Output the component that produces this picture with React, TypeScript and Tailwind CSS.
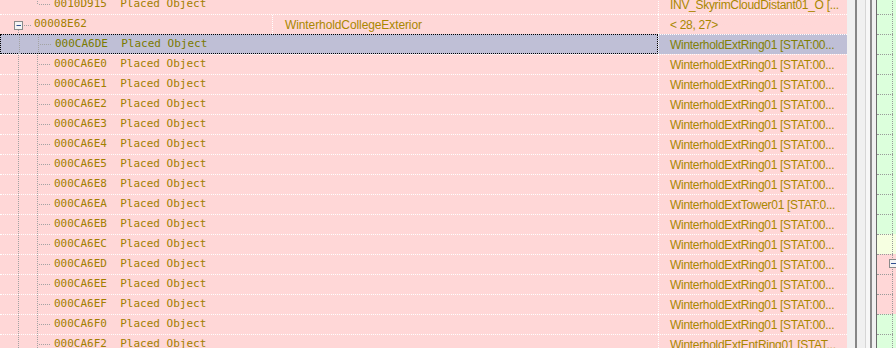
import React from 'react';

type Row = {
  id: string;
  kind: 'lastChild' | 'parent' | 'child';
  label?: string;
  name?: string;
  info: string;
  selected?: boolean;
};

const ring = 'WinterholdExtRing01 [STAT:00...';

const rows: Row[] = [
  { id: '0010D915', kind: 'lastChild', label: 'Placed Object', info: 'INV_SkyrimCloudDistant01_O [...' },
  { id: '00008E62', kind: 'parent', name: 'WinterholdCollegeExterior', info: '< 28,  27>' },
  { id: '000CA6DE', kind: 'child', label: 'Placed Object', info: ring, selected: true },
  { id: '000CA6E0', kind: 'child', label: 'Placed Object', info: ring },
  { id: '000CA6E1', kind: 'child', label: 'Placed Object', info: ring },
  { id: '000CA6E2', kind: 'child', label: 'Placed Object', info: ring },
  { id: '000CA6E3', kind: 'child', label: 'Placed Object', info: ring },
  { id: '000CA6E4', kind: 'child', label: 'Placed Object', info: ring },
  { id: '000CA6E5', kind: 'child', label: 'Placed Object', info: ring },
  { id: '000CA6E8', kind: 'child', label: 'Placed Object', info: ring },
  { id: '000CA6EA', kind: 'child', label: 'Placed Object', info: 'WinterholdExtTower01 [STAT:0...' },
  { id: '000CA6EB', kind: 'child', label: 'Placed Object', info: ring },
  { id: '000CA6EC', kind: 'child', label: 'Placed Object', info: ring },
  { id: '000CA6ED', kind: 'child', label: 'Placed Object', info: ring },
  { id: '000CA6EE', kind: 'child', label: 'Placed Object', info: ring },
  { id: '000CA6EF', kind: 'child', label: 'Placed Object', info: ring },
  { id: '000CA6F0', kind: 'child', label: 'Placed Object', info: ring },
  { id: '000CA6F2', kind: 'child', label: 'Placed Object', info: 'WinterholdExtEntRing01 [STAT...' },
];

// right pane row colours, same 20px grid as the list
const sideRows = [
  'g', 'g', 'g', 'g', 'g', 'g', 'g', 'g', 'g', 'g', 'g', 'g', 'y', 'p', 'p', 'p', 'g', 'g',
];

const mono = { fontFamily: '"DejaVu Sans Mono", monospace' };
const sans = { fontFamily: '"Liberation Sans", Arial, sans-serif' };

const MinusBox = () => (
  <>
    <rect x="14.5" y="6.5" width="8" height="8" fill="#f4f4f4" stroke="#8a8a8a" />
    <line x1="16.5" y1="10.5" x2="21" y2="10.5" stroke="#2f4f8f" />
  </>
);

const TreeLines: React.FC<{ kind: Row['kind'] }> = ({ kind }) => (
  <svg width="54" height="19" className="shrink-0" stroke="#a3a3a3" strokeDasharray="1 1">
    {kind === 'lastChild' && (
      <>
        <line x1="37.5" y1="0" x2="37.5" y2="10" />
        <line x1="39" y1="9.5" x2="51" y2="9.5" />
      </>
    )}
    {kind === 'parent' && (
      <>
        <line x1="18.5" y1="15" x2="18.5" y2="19" />
        <line x1="24" y1="10.5" x2="32" y2="10.5" />
        <g strokeDasharray="none">
          <MinusBox />
        </g>
      </>
    )}
    {kind === 'child' && (
      <>
        <line x1="18.5" y1="0" x2="18.5" y2="19" />
        <line x1="37.5" y1="0" x2="37.5" y2="19" />
        <line x1="39" y1="9.5" x2="51" y2="9.5" />
      </>
    )}
  </svg>
);

const ListRow: React.FC<{ row: Row }> = ({ row }) => {
  const bg = row.selected ? 'bg-[#bfbfd6]' : 'bg-[#ffd7d7]';
  const textColor = row.selected ? 'text-[#7a7a00]' : 'text-[#a27f00]';
  const sideColor = row.selected ? 'text-[#7f7f06]' : 'text-[#a98700]';
  return (
    <div className={`flex h-5 ${bg}`}>
      <div
        className={`flex w-[658px] shrink-0 ${
          row.selected ? 'border border-dotted border-black' : 'border-t border-dotted border-white'
        }`}
      >
        {row.kind === 'parent' ? (
          <>
            <div className="flex w-[272px] items-center" style={mono}>
              <TreeLines kind={row.kind} />
              <span className={`-ml-[20px] text-[11px] ${textColor}`}>{row.id}</span>
            </div>
            <div
              className={`flex flex-1 items-center border-l border-dotted border-white pl-[12px] text-[12px] tracking-[-0.1px] ${sideColor}`}
              style={sans}
            >
              {row.name}
            </div>
          </>
        ) : (
          <div className={`flex items-center whitespace-pre text-[11px] ${textColor}`} style={mono}>
            <TreeLines kind={row.kind} />
            {`${row.id}  ${row.label}`}
          </div>
        )}
      </div>
      <div
        className={`flex w-[189px] shrink-0 items-center overflow-hidden whitespace-nowrap border-t border-l border-dotted border-white pl-[11px] text-[12px] tracking-[-0.3px] ${sideColor}`}
        style={sans}
      >
        {row.info}
      </div>
    </div>
  );
};

const SideRow: React.FC<{ tone: string; box?: boolean }> = ({ tone, box }) => {
  const bg = tone === 'y' ? 'bg-[#f6ffe1]' : tone === 'p' ? 'bg-[#ffd7d7]' : 'bg-[#dcffdc]';
  return (
    <div className={`relative flex h-5 ${bg}`}>
      <div className="w-[16px] border-t border-r border-dotted border-[#9a9a9a]" />
      {box && (
        <svg width="9" height="9" className="absolute left-[12px] top-[5px]">
          <rect x="0.5" y="0.5" width="8" height="8" fill="#f4f4f4" stroke="#8a8a8a" />
          <line x1="2" y1="4.5" x2="7" y2="4.5" stroke="#2f4f8f" />
        </svg>
      )}
    </div>
  );
};

const App: React.FC = () => {
  return (
    <main className="h-[348px] w-[896px] overflow-hidden bg-[#f0f0f0]">
      <div className="-mt-[6px] flex">
        <div className="w-[847px] shrink-0">
          {rows.map((r) => (
            <ListRow key={r.id} row={r} />
          ))}
        </div>
        {/* scrollbar + splitter */}
        <div className="flex h-[360px] shrink-0">
          <div className="w-[8px] bg-[#f0f0f0]" />
          <div className="w-[2px] bg-[#868686]" />
          <div className="w-[8px] bg-[#f0f0f0]" />
          <div className="w-[1px] bg-[#d6d6d6]" />
          <div className="w-[4px] bg-[#f7f7f7]" />
          <div className="w-[2px] bg-[#8a8a8a]" />
          <div className="w-[4px] bg-[#f0f0f0]" />
          <div className="w-[1px] bg-[#6a6a6a]" />
        </div>
        <div className="flex-1">
          {sideRows.map((t, i) => (
            <SideRow key={i} tone={t} box={i === 13} />
          ))}
        </div>
      </div>
    </main>
  );
};

export default App;
